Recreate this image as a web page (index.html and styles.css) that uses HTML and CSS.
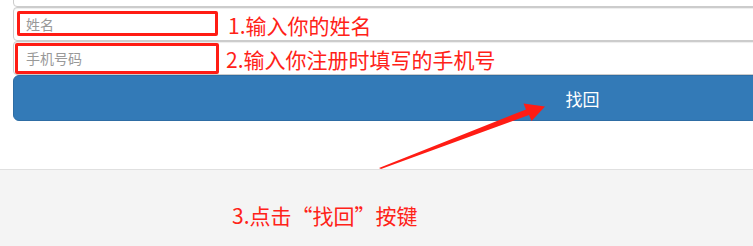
FILE: index.html
```html
<!DOCTYPE html>
<html lang="zh-CN">
<head>
<meta charset="utf-8">
<title>找回</title>
<link rel="stylesheet" href="styles.css">
</head>
<body>
<div class="page">
  <form class="form">
    <input class="field" type="text">
    <input class="field" type="text" placeholder="姓名">
    <input class="field" type="text" placeholder="手机号码">
    <button class="btn" type="button">找回</button>
  </form>
  <div class="spacer"></div>
  <div class="footer">
    <span class="note note-3">3.点击“找回”按键</span>
  </div>

  <div class="mark mark-1"></div>
  <div class="mark mark-2"></div>
  <span class="note note-1">1.输入你的姓名</span>
  <span class="note note-2">2.输入你注册时填写的手机号</span>
  <svg class="arrow" width="753" height="246" viewBox="0 0 753 246">
    <polygon points="379,168 526,109.5 523.5,103.5 545,106.5 531.5,121 529,115 381,169" fill="#ff1c14"/>
  </svg>
</div>
</body>
</html>
```

FILE: styles.css
```css
html, body {
  margin: 0;
  padding: 0;
  overflow: hidden;
  background: #fff;
}
body {
  font-family: "Noto Sans CJK SC", "Noto Sans", sans-serif;
  width: 753px;
  height: 246px;
}
.page {
  position: relative;
  display: flow-root;
  width: 1165px;
  height: 246px;
}
.form {
  display: flex;
  flex-direction: column;
  padding: 0 13px;
  margin: -27px 0 0;
  width: 1139px;
}
.field {
  display: block;
  box-sizing: border-box;
  height: 34px;
  width: 100%;
  margin: 0;
  padding: 0 12px;
  border: 1px solid #ccc;
  border-radius: 4px;
  box-shadow: inset 0 1px 1px rgba(0,0,0,.075);
  background: #fff;
  font-family: "Noto Sans CJK SC", sans-serif;
  font-size: 14px;
  color: #555;
  outline: none;
}
.field::placeholder {
  color: #999;
}
.btn {
  display: block;
  box-sizing: border-box;
  width: 100%;
  height: 46px;
  margin: 0;
  padding: 0 16px;
  border: 1px solid #2e6da4;
  border-radius: 6px;
  background: #337ab7;
  color: #fff;
  font-family: "Noto Sans CJK SC", sans-serif;
  font-size: 17px;
  cursor: pointer;
}
.spacer {
  height: 48px;
}
.footer {
  box-sizing: border-box;
  height: 77px;
  border-top: 1px solid #e0e0e0;
  background: #f4f4f4;
  padding: 30px 0 0 232px;
}
.note {
  font-size: 21px;
  line-height: 30px;
  color: #ff2218;
  white-space: nowrap;
}
.note-1 {
  position: absolute;
  left: 228px;
  top: 10px;
}
.note-2 {
  position: absolute;
  left: 226px;
  top: 44px;
}
.mark {
  position: absolute;
  box-sizing: border-box;
  border: 3px solid #ff1c14;
  border-radius: 2px;
}
.mark-1 {
  left: 17px;
  top: 11px;
  width: 201px;
  height: 25px;
}
.mark-2 {
  left: 15px;
  top: 43px;
  width: 204px;
  height: 31px;
}
.arrow {
  position: absolute;
  left: 0;
  top: 0;
  pointer-events: none;
}
```
